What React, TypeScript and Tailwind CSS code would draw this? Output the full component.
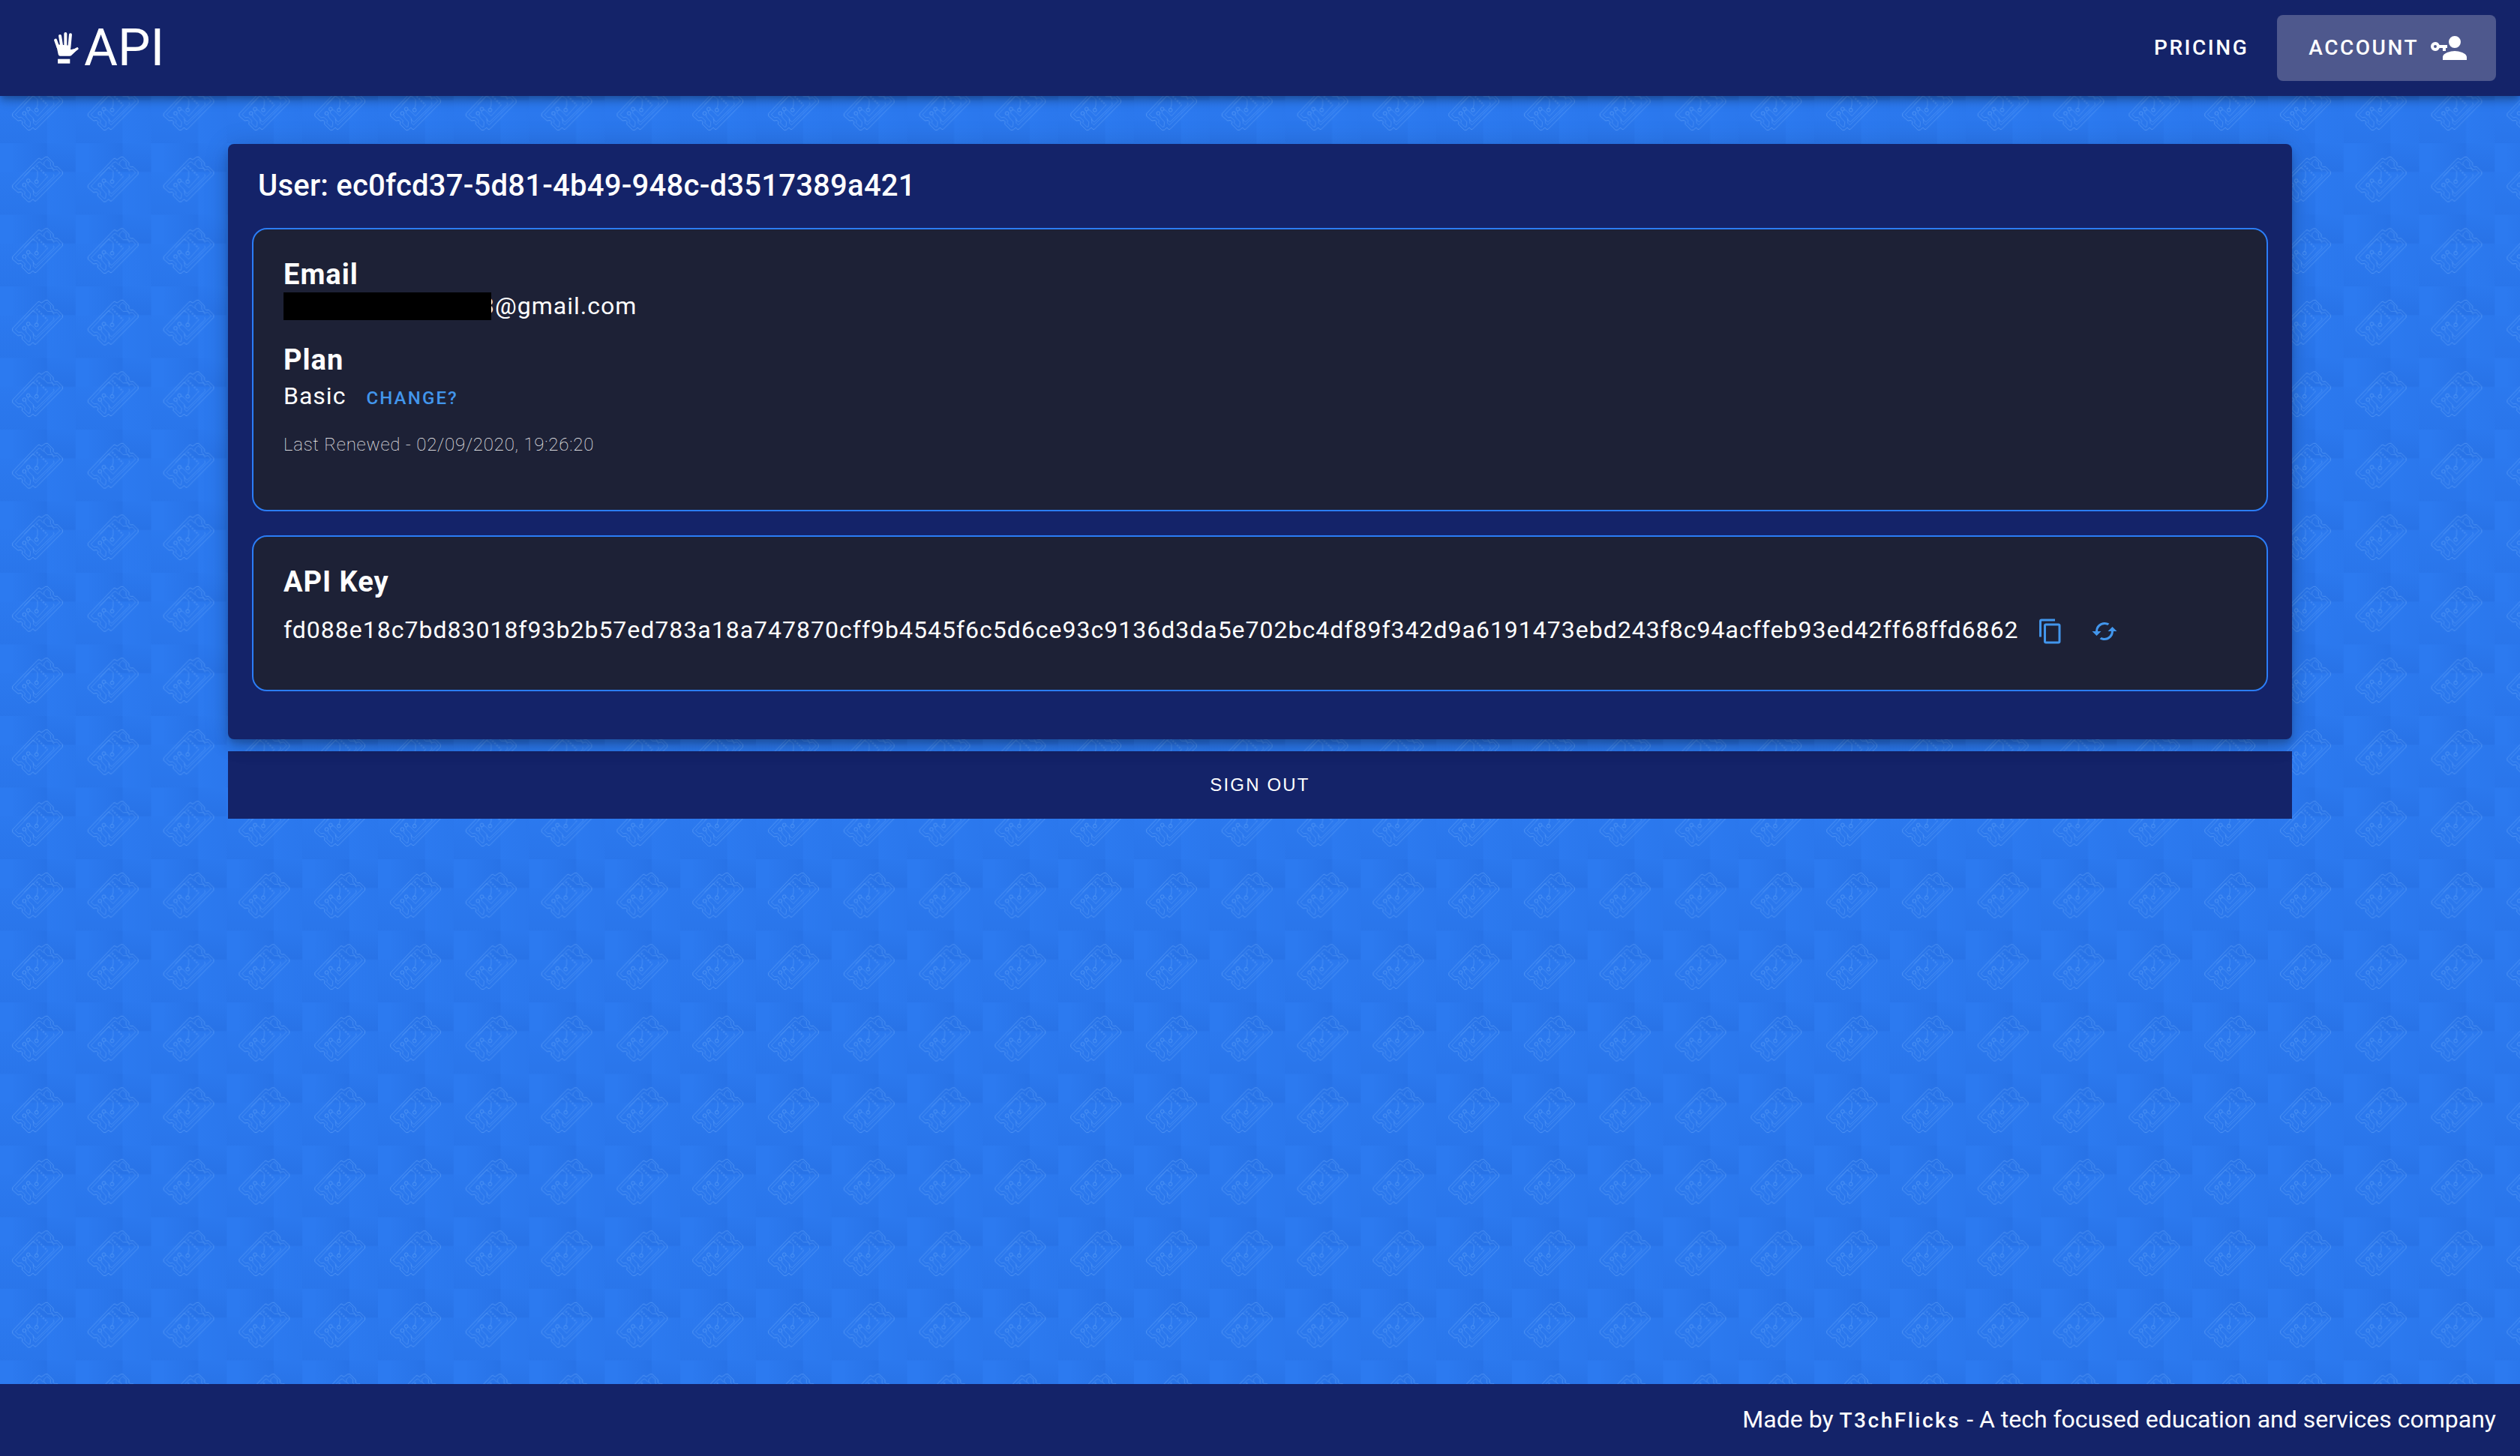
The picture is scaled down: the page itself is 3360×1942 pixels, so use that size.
import type { ReactNode } from "react";

const TICKET =
  "M50 178L50 168L150 64L156 60L166 66L182 55H190L213 78L213 88L220 95L230 94L250 114L250 124L144 231H138L132 224L120 234H112L88 210L90 202L84 195L72 197Z";
const TICKET_INNER =
  "M61 172L152 77L160 74L174 88M61 172L74 184L86 183L100 196L98 206L114 222L120 220L122 202L104 182V174M112 158V166L134 188V208M130 190L144 202L216 132L214 124M137 208L142 214L240 118L228 104L216 106L202 90V76L188 64L176 76V86L190 100L208 100L216 112M190 134L150 178L128 156L120 152M134 96L150 112V134L146 148M132 96L96 132M138 104L132 98";

function TicketBackdrop() {
  return (
    <svg className="pointer-events-none absolute inset-0 h-full w-full" aria-hidden="true">
      <defs>
        <linearGradient id="patchA" x1="0" y1="0" x2="1" y2="0">
          <stop offset="0" stopColor="#1d5fcf" stopOpacity="0.02" />
          <stop offset="1" stopColor="#1d5fcf" stopOpacity="0.28" />
        </linearGradient>
        <linearGradient id="patchB" x1="0" y1="0" x2="0" y2="1">
          <stop offset="0" stopColor="#1d5fcf" stopOpacity="0.06" />
          <stop offset="1" stopColor="#1d5fcf" stopOpacity="0.28" />
        </linearGradient>
        <pattern
          id="tickets"
          width="302.4"
          height="286.5"
          patternUnits="userSpaceOnUse"
          patternTransform="scale(0.33333)"
        >
          <rect width="303" height="287" fill="#2c7af0" />
          <rect x="50" width="138" height="115" fill="url(#patchA)" />
          <rect x="188" width="115" height="115" fill="url(#patchB)" />
          <rect y="115" width="188" height="172" fill="url(#patchB)" opacity="0.6" />
          <rect x="188" y="115" width="115" height="172" fill="url(#patchA)" opacity="0.35" />
          <g fill="none" stroke="#6aa9fa" strokeOpacity="0.6" strokeWidth="2.8">
            <path d={TICKET} />
            <path d={TICKET_INNER} strokeOpacity="0.45" />
            <circle cx="97" cy="167" r="7" />
            <circle cx="113" cy="150" r="7" />
            <circle cx="146" cy="154" r="7" />
            <path d="M146 90L190 134" strokeWidth="7" strokeDasharray="7 5" strokeOpacity="0.35" />
          </g>
        </pattern>
      </defs>
      <rect width="100%" height="100%" fill="url(#tickets)" />
    </svg>
  );
}

function HandLogo() {
  return (
    <svg viewBox="36 36 99 127" className="h-[42px] w-[33px]" aria-hidden="true">
      <g stroke="#fff" strokeWidth="12" strokeLinecap="round" fill="none">
        <path d="M42 68L52 96M60 51L67 95M82 42V95M102 46L97 100" />
        <path d="M129 102L104 118" strokeWidth="10" />
      </g>
      <path d="M44 84L56 86L100 90L103 106L124 101L130 106L107 128Q104 132 98 132H60Q55 132 53 126Z" fill="#fff" />
      <rect x="51" y="144" width="49" height="18" fill="#fff" />
    </svg>
  );
}

function Icon({ d, className }: { d: string; className: string }) {
  return (
    <svg viewBox="0 0 24 24" fill="currentColor" className={className} aria-hidden="true">
      <path d={d} />
    </svg>
  );
}

const ACCOUNT_KEY =
  "M11,10V12H10V14H8V12H5.83C5.42,13.17 4.31,14 3,14A3,3 0 0,1 0,11A3,3 0 0,1 3,8C4.31,8 5.42,8.83 5.83,10H11M3,10A1,1 0 0,0 2,11A1,1 0 0,0 3,12A1,1 0 0,0 4,11A1,1 0 0,0 3,10M16,14C18.67,14 24,15.34 24,18V20H8V18C8,15.34 13.33,14 16,14M16,12A4,4 0 0,1 12,8A4,4 0 0,1 16,4A4,4 0 0,1 20,8A4,4 0 0,1 16,12Z";
const CONTENT_COPY =
  "M19,21H8V7H19M19,5H8A2,2 0 0,0 6,7V21A2,2 0 0,0 8,23H19A2,2 0 0,0 21,21V7A2,2 0 0,0 19,5M16,1H4A2,2 0 0,0 2,3V17H4V3H16V1Z";
const CACHED =
  "M19,8L15,12H18A6,6 0 0,1 12,18C11,18 10.03,17.75 9.2,17.3L7.74,18.76C8.97,19.54 10.43,20 12,20A8,8 0 0,0 20,12H23M6,12A6,6 0 0,1 12,6C13,6 13.97,6.25 14.8,6.7L16.26,5.24C15.03,4.46 13.57,4 12,4A8,8 0 0,0 4,12H1L5,16L9,12";

function Panel({ children, className }: { children: ReactNode; className: string }) {
  return (
    <section
      className={`rounded-[20px] border-2 border-[#2b7df7] bg-[#1d2136] px-10 pt-[38px] tracking-[1px] ${className}`}
    >
      {children}
    </section>
  );
}

function Heading({ children }: { children: ReactNode }) {
  return <h2 className="text-[38px] leading-[44px] font-bold">{children}</h2>;
}

export default function App() {
  return (
    <div className="relative isolate flex min-h-screen flex-col bg-[#2b79f0] font-[Roboto,sans-serif] text-white">
      <TicketBackdrop />

      <header className="relative z-20 flex h-32 items-center justify-between bg-[#142369] pr-8 pl-[72px] shadow-[0_4px_8px_-2px_rgba(0,0,0,0.2),0_8px_10px_0_rgba(0,0,0,0.14),0_2px_20px_0_rgba(0,0,0,0.12)]">
        <a href="#home" className="flex items-center gap-[7px]">
          <HandLogo />
          <span className="text-[69px] leading-[80px]">API</span>
        </a>
        <nav className="flex items-center text-[28px] font-medium tracking-[0.09em]">
          <a href="#pricing" className="px-[38px]">
            PRICING
          </a>
          <a href="#account" className="flex h-[88px] items-center gap-4 rounded-lg bg-[#4e588d] pr-[39px] pl-[42px]">
            ACCOUNT
            <Icon d={ACCOUNT_KEY} className="size-12" />
          </a>
        </nav>
      </header>

      <main className="relative mx-auto w-10/12 flex-1 px-6 pt-16">
        <div className="relative z-10 rounded-lg bg-[#142369] px-8 pt-6 pb-16 shadow-[0_6px_10px_-2px_rgba(0,0,0,0.2),0_12px_20px_0_rgba(0,0,0,0.14),0_2px_36px_0_rgba(0,0,0,0.12)]">
          <h1 className="mb-6 px-2 text-[40px] leading-[64px] font-medium tracking-[0.006em]">
            User: ec0fcd37-5d81-4b49-948c-d3517389a421
          </h1>

          <Panel className="pb-[71px]">
            <Heading>Email</Heading>
            <div className="flex items-center text-[32px] leading-[40px]">
              <span className="z-10 h-[37px] w-[277px] bg-black" />
              <span className="-ml-[14px]">3@gmail.com</span>
            </div>
            <div className="mt-[30px]">
              <Heading>Plan</Heading>
            </div>
            <div className="mt-[6px] flex items-baseline gap-[27px] text-[32px] leading-[40px]">
              <span>Basic</span>
              <button type="button" className="text-[24px] leading-[32px] font-medium tracking-[0.09em] text-[#4296ec]">
                CHANGE?
              </button>
            </div>
            <p className="mt-[29px] text-[24px] leading-[32px] font-thin tracking-[0.033em]">
              Last Renewed - 02/09/2020, 19:26:20
            </p>
          </Panel>

          <Panel className="mt-8 pb-[60px]">
            <Heading>API Key</Heading>
            <div className="mt-[22px] flex items-end text-[32px] leading-[40px]">
              <span>
                fd088e18c7bd83018f93b2b57ed783a18a747870cff9b4545f6c5d6ce93c9136d3da5e702bc4df89f342d9a6191473ebd243f8c94acffeb93ed42ff68ffd6862
              </span>
              <button type="button" aria-label="Copy API key" className="ml-6 text-[#4296ec]">
                <Icon d={CONTENT_COPY} className="size-9" />
              </button>
              <button type="button" aria-label="Regenerate API key" className="ml-9 text-[#4296ec]">
                <Icon d={CACHED} className="size-9" />
              </button>
            </div>
          </Panel>
        </div>

        <button
          type="button"
          className="mt-4 block h-[90px] w-full bg-[#142369] font-['Liberation_Sans',sans-serif] text-[24px] tracking-[0.09em]"
        >
          SIGN OUT
        </button>
      </main>

      <footer className="relative flex h-24 items-center justify-end bg-[#142369] px-8 text-[32px] leading-[40px]">
        <p>
          Made by{" "}
          <a href="#t3chflicks" className="text-[28px] font-medium tracking-[0.09em]">
            T3chFlicks
          </a>{" "}
          - A tech focused education and services company
        </p>
      </footer>
    </div>
  );
}
